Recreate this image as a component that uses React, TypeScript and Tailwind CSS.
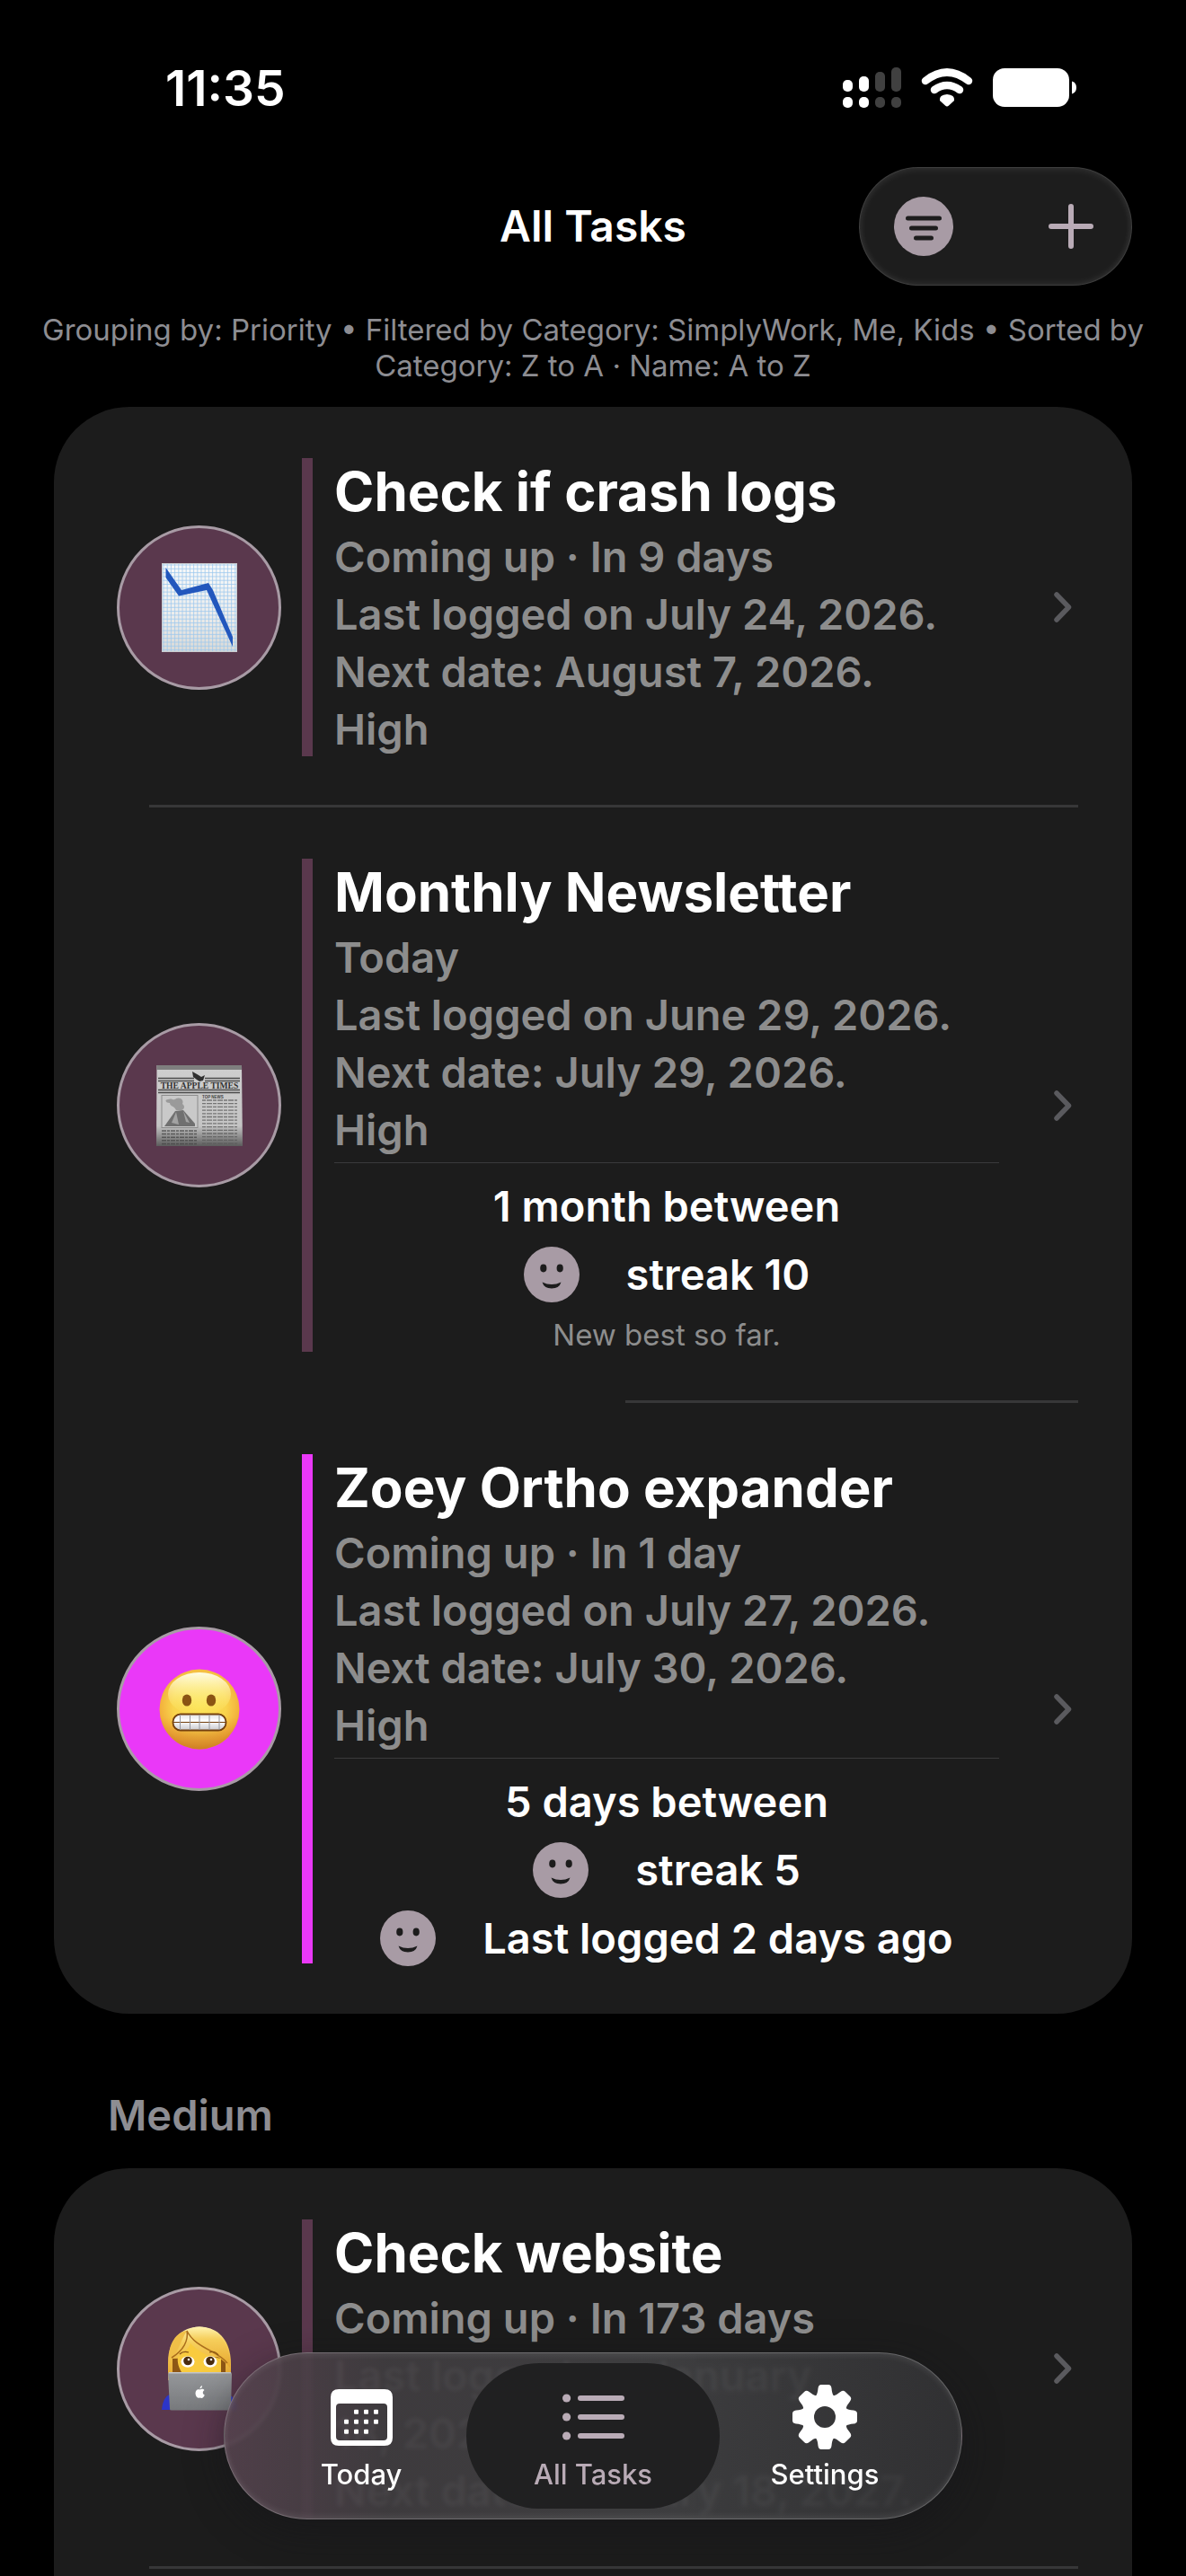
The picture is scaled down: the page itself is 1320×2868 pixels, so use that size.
import type { ReactNode } from 'react';
import clsx from 'clsx';

interface Stat {
  label: string;
  smiley?: boolean;
}

interface Task {
  title: string;
  icon: ReactNode;
  lines: string[];
  pink?: boolean;
  stats?: Stat[];
  note?: string;
  divider?: string;
}

function ChartEmoji() {
  const cols = Array.from({ length: 20 }, (_, i) => 2 + i * 4.2);
  const rows = Array.from({ length: 23 }, (_, i) => 2 + i * 4.3);
  return (
    <svg width="84" height="99" viewBox="0 0 84 99" aria-hidden="true">
      <defs>
        <linearGradient id="chart-paper" x1="0" y1="0" x2="0" y2="1">
          <stop offset="0" stopColor="#f7f9fa" />
          <stop offset="0.6" stopColor="#ececeb" />
          <stop offset="1" stopColor="#d9d9d6" />
        </linearGradient>
      </defs>
      <rect width="84" height="99" fill="url(#chart-paper)" />
      {cols.map(x => <path key={x} d={`M${x} 0V99`} stroke="#9cc8ee" strokeWidth="1" opacity="0.75" />)}
      {rows.map(y => <path key={y} d={`M0 ${y}H84`} stroke="#9cc8ee" strokeWidth="1" opacity="0.75" />)}
      <rect x="0.5" y="0.5" width="83" height="98" fill="none" stroke="#c8ccd0" />
      <path d="M4.500 5L22 30L52 22L57 30L79 82V93L50 30L19 36.500L4.500 16Z" fill="#2257bd" />
    </svg>
  );
}

function NewsEmoji() {
  const left = Array.from({ length: 5 }, (_, i) => 73 + i * 3.6);
  const right = Array.from({ length: 14 }, (_, i) => 39 + i * 3.7);
  return (
    <svg width="96" height="90" viewBox="0 0 96 90" aria-hidden="true">
      <defs>
        <linearGradient id="news-paper" x1="0" y1="0" x2="0" y2="1">
          <stop offset="0" stopColor="#cfcfcf" />
          <stop offset="0.75" stopColor="#c4c4c4" />
          <stop offset="0.88" stopColor="#8f8f8f" />
          <stop offset="1" stopColor="#5c5c5c" />
        </linearGradient>
      </defs>
      <path d="M0.500 0H95L96 90H0Z" fill="url(#news-paper)" />
      <rect x="0.500" width="94.500" height="5" fill="#7f7f7f" />
      <path d="M2 14.500H42M54 14.500H93M2 17.500H42M54 17.500H93M2 27.500H93M2 30.500H93" stroke="#4b4b4b" strokeWidth="1.400" />
      <path d="M40 7L47 11L50 13L54 11L52 17L48 18L45 16L41 13Z" fill="#303030" />
      <text x="48" y="25.500" textAnchor="middle" fontSize="9.600" fontWeight="700" fill="#333" fontFamily="Liberation Serif, serif">THE APPLE TIMES</text>
      <rect x="6" y="33.500" width="40" height="36" fill="#c9c9c9" stroke="#8c8c8c" />
      <path d="M9 68L21 51L30 50L43 65V68Z" fill="#707070" />
      <path d="M17 64L22 52L25 66ZM30 51L33 63L37 64Z" fill="#a3a3a3" />
      <path d="M22 50C20 45 15 46 15 42C10 42 9 38 13 38C17 36 20 40 22 37C27 35 31 39 29 43C33 46 30 50 28 50Z" fill="#9a9a9a" />
      <text x="51" y="37" fontSize="4.500" fontWeight="700" fill="#444" fontFamily="Liberation Sans, sans-serif">TOP NEWS</text>
      {left.map(y => <path key={y} d={`M6 ${y}H46`} stroke="#4a4a4a" strokeWidth="1.500" strokeDasharray="5 1 3 1" opacity="0.8" />)}
      {right.map(y => <path key={y} d={`M51 ${y}H90`} stroke="#5a5a5a" strokeWidth="1.300" strokeDasharray="4 1 6 1" opacity="0.75" />)}
    </svg>
  );
}

function GrimaceEmoji() {
  return (
    <svg width="90" height="90" viewBox="0 0 90 90" aria-hidden="true">
      <defs>
        <radialGradient id="face-fill" cx="0.5" cy="0.45" r="0.56">
          <stop offset="0" stopColor="#fbe255" />
          <stop offset="0.6" stopColor="#f9d34c" />
          <stop offset="0.88" stopColor="#f3b13c" />
          <stop offset="1" stopColor="#e39a30" />
        </radialGradient>
        <linearGradient id="face-shine" x1="0" y1="0" x2="0" y2="1">
          <stop offset="0" stopColor="#fffde6" />
          <stop offset="1" stopColor="#fff26a" stopOpacity="0" />
        </linearGradient>
        <linearGradient id="face-shade" x1="0" y1="0" x2="0" y2="1">
          <stop offset="0.6" stopColor="#e08a28" stopOpacity="0" />
          <stop offset="1" stopColor="#c87820" stopOpacity="0.8" />
        </linearGradient>
        <linearGradient id="teeth" x1="0" y1="0" x2="0" y2="1">
          <stop offset="0" stopColor="#e2e2e6" />
          <stop offset="0.4" stopColor="#ffffff" />
          <stop offset="1" stopColor="#c9c9ce" />
        </linearGradient>
      </defs>
      <circle cx="45" cy="45" r="44.500" fill="url(#face-fill)" />
      <circle cx="45" cy="45" r="44.500" fill="url(#face-shade)" />
      <ellipse cx="45" cy="28" rx="35" ry="24" fill="url(#face-shine)" />
      <ellipse cx="31" cy="35" rx="5.200" ry="6.600" fill="#8a5413" />
      <ellipse cx="58" cy="35" rx="5.200" ry="6.600" fill="#8a5413" />
      <rect x="15.500" y="50.500" width="59" height="18" rx="8.500" fill="url(#teeth)" stroke="#74400e" strokeWidth="1.800" />
      <path d="M16 59.500H74" stroke="#74400e" strokeWidth="1.200" />
      <path d="M23.500 51V68M34.500 51V68M45 51V68M56 51V68M67 51V68" stroke="#96969c" strokeWidth="1" />
    </svg>
  );
}

function TechnologistEmoji() {
  return (
    <svg width="86" height="94" viewBox="0 0 86 94" aria-hidden="true">
      <defs>
        <linearGradient id="hair" x1="0" y1="0" x2="0" y2="1">
          <stop offset="0" stopColor="#fff3b0" />
          <stop offset="0.3" stopColor="#f6cf5c" />
          <stop offset="1" stopColor="#e9a92f" />
        </linearGradient>
        <linearGradient id="laptop" x1="0" y1="0" x2="0" y2="1">
          <stop offset="0" stopColor="#96989b" />
          <stop offset="1" stopColor="#77797c" />
        </linearGradient>
      </defs>
      <path d="M1 93Q2 79 11 75H75Q84 80 85 93Z" fill="#2c35c8" />
      <path d="M8 60V40C8 14 24 0.500 43 0.500C64 0.500 78 16 78 42V60Z" fill="url(#hair)" />
      <path d="M13 51V36L72 34V51Z" fill="#8e5715" />
      <path d="M19 34C26 30 31 24 33 19C42 29 54 34 67 36V51H23C20 46 18 40 19 34Z" fill="#f9cb3e" />
      <path d="M29 5C24 12 18 32 9 40C8 18 18 6 29 5Z" fill="#f0bf48" />
      <path d="M29 5C40 28 62 27 77 46C78 20 64 1 43 0.500C37 0.500 32 2 29 5Z" fill="url(#hair)" />
      <path d="M29 5C31 16 25 27 12 35M29 5C39 25 62 26 74 41" fill="none" stroke="#a96d1c" strokeWidth="1.500" />
      <path d="M21 31Q25 27 31 29M54 29Q60 27 64 32" fill="none" stroke="#8a5413" strokeWidth="1.300" />
      <ellipse cx="30" cy="39.500" rx="7.500" ry="6.200" fill="#fff" />
      <ellipse cx="55" cy="39.500" rx="7.500" ry="6.200" fill="#fff" />
      <circle cx="30" cy="38.500" r="4.800" fill="#4a2c0e" />
      <circle cx="55" cy="38.500" r="4.800" fill="#4a2c0e" />
      <circle cx="31" cy="37" r="1.300" fill="#fff" />
      <circle cx="56" cy="37" r="1.300" fill="#fff" />
      <path d="M10 51H77Q79 51 79 53L78 92Q78 93.500 76 93.500H12Q10 93.500 10 92L8 53Q8 51 10 51Z" fill="url(#laptop)" />
      <path d="M9 51.800H78" stroke="#c4c5c8" strokeWidth="1.500" />
      <path d="M43.500 70.500C45 69.500 47.500 69.500 48.500 71C46 73 46.500 75.500 48.800 76.500C47.500 79.500 46 80.500 43.500 79.500C41 80.500 39 78.500 38.500 75C38.500 70.500 41 69.500 43.500 70.500ZM43.500 69.500C43.500 67.500 44.500 66.500 46 66C46 68 45.200 69.200 43.500 69.500Z" fill="#fff" />
    </svg>
  );
}

function Smiley() {
  return (
    <svg width="62" height="62" viewBox="0 0 62 62" aria-hidden="true">
      <circle cx="31" cy="31" r="31" fill="#a89ba5" />
      <ellipse cx="21.800" cy="24" rx="3.600" ry="4.400" fill="#1c1c1c" />
      <ellipse cx="40.200" cy="24" rx="3.600" ry="4.400" fill="#1c1c1c" />
      <path d="M20.500 39.500Q31 44.500 41.500 39.500Q39.500 46.500 31 46.500Q22.500 46.500 20.500 39.500Z" fill="#1c1c1c" />
    </svg>
  );
}

function Chevron() {
  return (
    <svg width="20" height="34" viewBox="0 0 20 34" fill="none" aria-hidden="true" className="shrink-0">
      <path d="M3 3L16.500 17L3 31" stroke="#5a5a5e" strokeWidth="5.500" strokeLinecap="round" strokeLinejoin="round" />
    </svg>
  );
}

function StatusIcons() {
  return (
    <div className="flex items-center">
      <svg width="65" height="46" viewBox="0 0 65 46" fill="#fff" aria-hidden="true">
        <rect y="14" width="11" height="13" rx="5" />
        <rect x="18" y="10" width="11" height="17" rx="5" />
        <rect x="36" y="5" width="11" height="22" rx="5" fill="#404040" />
        <rect x="54" y="0" width="11" height="27" rx="5" fill="#404040" />
        <rect y="33" width="11" height="12" rx="5" />
        <rect x="18" y="33" width="11" height="12" rx="5" />
        <rect x="36" y="33" width="11" height="12" rx="5" fill="#404040" />
        <rect x="54" y="33" width="11" height="12" rx="5" fill="#404040" />
      </svg>
      <svg width="58" height="44" viewBox="0 0 58 44" fill="none" aria-hidden="true" className="ml-[22px]">
        <path d="M5 14Q29 -5 53 14" stroke="#fff" strokeWidth="8.500" strokeLinecap="round" />
        <path d="M15 24Q29 14 43 24" stroke="#fff" strokeWidth="8.500" strokeLinecap="round" />
        <path d="M29 29Q38 29.500 37 36L31 41.500Q29 43.500 27 41.500L21 36Q20 29.500 29 29Z" fill="#fff" />
      </svg>
      <svg width="94" height="44" viewBox="0 0 94 44" fill="#fff" aria-hidden="true" className="ml-[22px]">
        <rect width="85" height="43" rx="13" />
        <path d="M88 14.500Q93 16 93 21.500Q93 27 88 28.500Z" />
      </svg>
    </div>
  );
}

function CalendarIcon() {
  const dots = [[28, 25], [39, 25], [50, 25], [17, 36], [28, 36], [39, 36], [50, 36], [17, 47], [28, 47], [39, 47]];
  return (
    <svg width="69" height="63" viewBox="0 0 69 63" aria-hidden="true">
      <path
        fillRule="evenodd"
        d="M9 0H60Q69 0 69 9V54Q69 63 60 63H9Q0 63 0 54V9Q0 0 9 0ZM10 16Q6 16 6 20V53Q6 57 10 57H59Q63 57 63 53V20Q63 16 59 16Z"
        fill="#fff"
      />
      {dots.map(([x, y]) => <rect key={`${x}-${y}`} x={x - 2} y={y - 2.2} width="5" height="5" rx="1" fill="#fff" />)}
    </svg>
  );
}

function ListIcon() {
  return (
    <svg width="69" height="52" viewBox="0 0 69 52" aria-hidden="true" fill="#b9abb6">
      {[5, 26, 47].map(y => (
        <g key={y}>
          <circle cx="4.600" cy={y} r="4.600" />
          <rect x="17" y={y - 3} width="52" height="6" rx="3" />
        </g>
      ))}
    </svg>
  );
}

function GearIcon() {
  return (
    <svg width="72" height="72" viewBox="-36 -36 72 72" aria-hidden="true">
      <mask id="gear-hole">
        <rect x="-36" y="-36" width="72" height="72" fill="#fff" />
        <circle r="12" fill="#000" />
      </mask>
      <g fill="#fff" mask="url(#gear-hole)">
        <circle r="26" />
        {[0, 45, 90, 135, 180, 225, 270, 315].map(a => (
          <path key={a} transform={`rotate(${a})`} d="M-10 -23Q-8 -26 -7.500 -32Q-7 -36 -4 -36H4Q7 -36 7.500 -32Q8 -26 10 -23Z" />
        ))}
      </g>
    </svg>
  );
}

function TaskRow({ task }: { task: Task }) {
  return (
    <li>
      <a href="#task" className="flex pt-[57px] pr-[67px] pb-[54px] pl-[70px]">
        <span
          className={clsx(
            'flex size-[183px] shrink-0 items-center justify-center self-center rounded-full border-[3px] border-[#a89ba5]',
            task.pink ? 'bg-[#ea38f8]' : 'bg-[#5a384d]'
          )}
        >
          {task.icon}
        </span>
        <span className={clsx('ml-[23px] w-3 shrink-0', task.pink ? 'bg-[#ea38f8]' : 'bg-[#5a384d]')} />
        <div className="-mb-0.5 ml-6 min-w-0 flex-1">
          <h3 className="mb-1 text-[60px] leading-[74px] font-bold text-white">{task.title}</h3>
          {task.lines.map(line => (
            <p key={line} className="text-[47px] leading-[64px] font-semibold text-[#8d8d8d]">{line}</p>
          ))}
          {task.stats && (
            <div className="mt-1 -mb-0.5 flex flex-col items-center gap-3 border-t border-[#3a3a3c] pt-4">
              {task.stats.map(s => (
                <div key={s.label} className="flex items-center gap-[52px] text-[47px] leading-[64px] font-semibold text-white">
                  {s.smiley && <Smiley />}
                  <span>{s.label}</span>
                </div>
              ))}
              {task.note && <p className="text-[33px] leading-[46px] text-[#8d8d8d]">{task.note}</p>}
            </div>
          )}
        </div>
        <span className="ml-[61px] flex items-center"><Chevron /></span>
      </a>
      {task.divider && <div className={clsx('mr-[60px] h-[3px] bg-[#373738]', task.divider)} />}
    </li>
  );
}

const highTasks: Task[] = [
  {
    title: 'Check if crash logs',
    icon: <ChartEmoji />,
    lines: ['Coming up · In 9 days', 'Last logged on July 24, 2026.', 'Next date: August 7, 2026.', 'High'],
    divider: 'ml-[106px]',
  },
  {
    title: 'Monthly Newsletter',
    icon: <NewsEmoji />,
    lines: ['Today', 'Last logged on June 29, 2026.', 'Next date: July 29, 2026.', 'High'],
    stats: [{ label: '1 month between' }, { label: 'streak 10', smiley: true }],
    note: 'New best so far.',
    divider: 'ml-[636px]',
  },
  {
    title: 'Zoey Ortho expander',
    icon: <GrimaceEmoji />,
    lines: ['Coming up · In 1 day', 'Last logged on July 27, 2026.', 'Next date: July 30, 2026.', 'High'],
    pink: true,
    stats: [
      { label: '5 days between' },
      { label: 'streak 5', smiley: true },
      { label: 'Last logged 2 days ago', smiley: true },
    ],
  },
];

const mediumTasks: Task[] = [
  {
    title: 'Check website',
    icon: <TechnologistEmoji />,
    // day and year stay together when the line wraps
    lines: ['Coming up · In 173 days', 'Last logged on January 18,\u00a02026.', 'Next date: January 18, 2027.'],
    divider: 'ml-[106px]',
  },
];

const tabs = [
  { label: 'Today', icon: <CalendarIcon /> },
  { label: 'All Tasks', icon: <ListIcon />, active: true },
  { label: 'Settings', icon: <GearIcon /> },
];

function TabBar() {
  return (
    <nav className="absolute bottom-[63px] left-1/2 flex -translate-x-1/2 rounded-full border border-white/25 bg-[linear-gradient(90deg,rgba(84,66,77,0.92),rgba(64,61,64,0.93)_22%,rgba(64,64,66,0.93)_60%,rgba(50,50,52,0.95))] p-[11px] shadow-[0_12px_40px_rgba(20,20,24,0.5),inset_0_3px_6px_rgba(255,255,255,0.08),inset_0_-3px_6px_rgba(255,255,255,0.08)] backdrop-blur-[2px]">
      {tabs.map(tab => (
        <button
          key={tab.label}
          type="button"
          className={clsx(
            '-ml-6 flex h-[162px] w-[282px] flex-col items-center rounded-full pt-[24px] first:ml-0',
            tab.active ? 'bg-[#202021] text-[#b9abb6]' : 'text-white'
          )}
        >
          <span className="flex h-[72px] items-center">{tab.icon}</span>
          <span className="mt-2 text-[31px] leading-[40px] font-medium">{tab.label}</span>
        </button>
      ))}
    </nav>
  );
}

export default function App() {
  return (
    <div className="relative flex h-screen flex-col overflow-hidden bg-black font-['Inter',sans-serif]">
      <div className="flex shrink-0 items-center justify-between pt-[66px] pr-[121px] pb-[56px] pl-[184px]">
        <span className="text-[55px] leading-[64px] font-semibold text-white">11:35</span>
        <StatusIcons />
      </div>

      <header className="grid shrink-0 grid-cols-[1fr_auto_1fr] items-center px-[60px]">
        <h1 className="col-start-2 text-[48px] leading-[64px] font-semibold text-white">All Tasks</h1>
        <div className="flex h-[132px] w-[304px] items-center justify-between justify-self-end rounded-full border border-white/15 bg-[#1d1d1d] pr-[42px] pl-[38px] shadow-[inset_0_2px_8px_rgba(255,255,255,0.08),inset_0_-2px_8px_rgba(255,255,255,0.06)]">
          <button type="button" aria-label="Filter">
            <svg width="66" height="66" viewBox="0 0 66 66" aria-hidden="true">
              <circle cx="33" cy="33" r="33" fill="#a89ba5" />
              <path d="M15.500 24H50.500M19.500 35H46.500M24.500 46H41.500" stroke="#1d1d1d" strokeWidth="5" strokeLinecap="round" />
            </svg>
          </button>
          <button type="button" aria-label="Add task">
            <svg width="50" height="50" viewBox="0 0 50 50" aria-hidden="true">
              <path d="M25 3V47M3 25H47" stroke="#b9abb6" strokeWidth="6" strokeLinecap="round" />
            </svg>
          </button>
        </div>
      </header>

      <p className="mt-[29px] shrink-0 px-10 text-center text-[33px] leading-[40px] text-[#8d8d92]">
        Grouping by: Priority • Filtered by Category: SimplyWork, Me, Kids • Sorted by Category: Z to A · Name: A to Z
      </p>

      <main className="mt-[26px] flex flex-1 flex-col px-[60px]">
        <ul className="shrink-0 rounded-[84px] bg-[#1c1c1c] pb-0.5">
          {highTasks.map(task => <TaskRow key={task.title} task={task} />)}
        </ul>
        <h2 className="mt-[81px] mb-[27px] shrink-0 px-[60px] text-[47px] leading-[64px] font-semibold text-[#8d8d92]">Medium</h2>
        <ul className="flex-1 rounded-t-[84px] bg-[#1c1c1c]">
          {mediumTasks.map(task => <TaskRow key={task.title} task={task} />)}
        </ul>
      </main>

      <TabBar />
    </div>
  );
}
